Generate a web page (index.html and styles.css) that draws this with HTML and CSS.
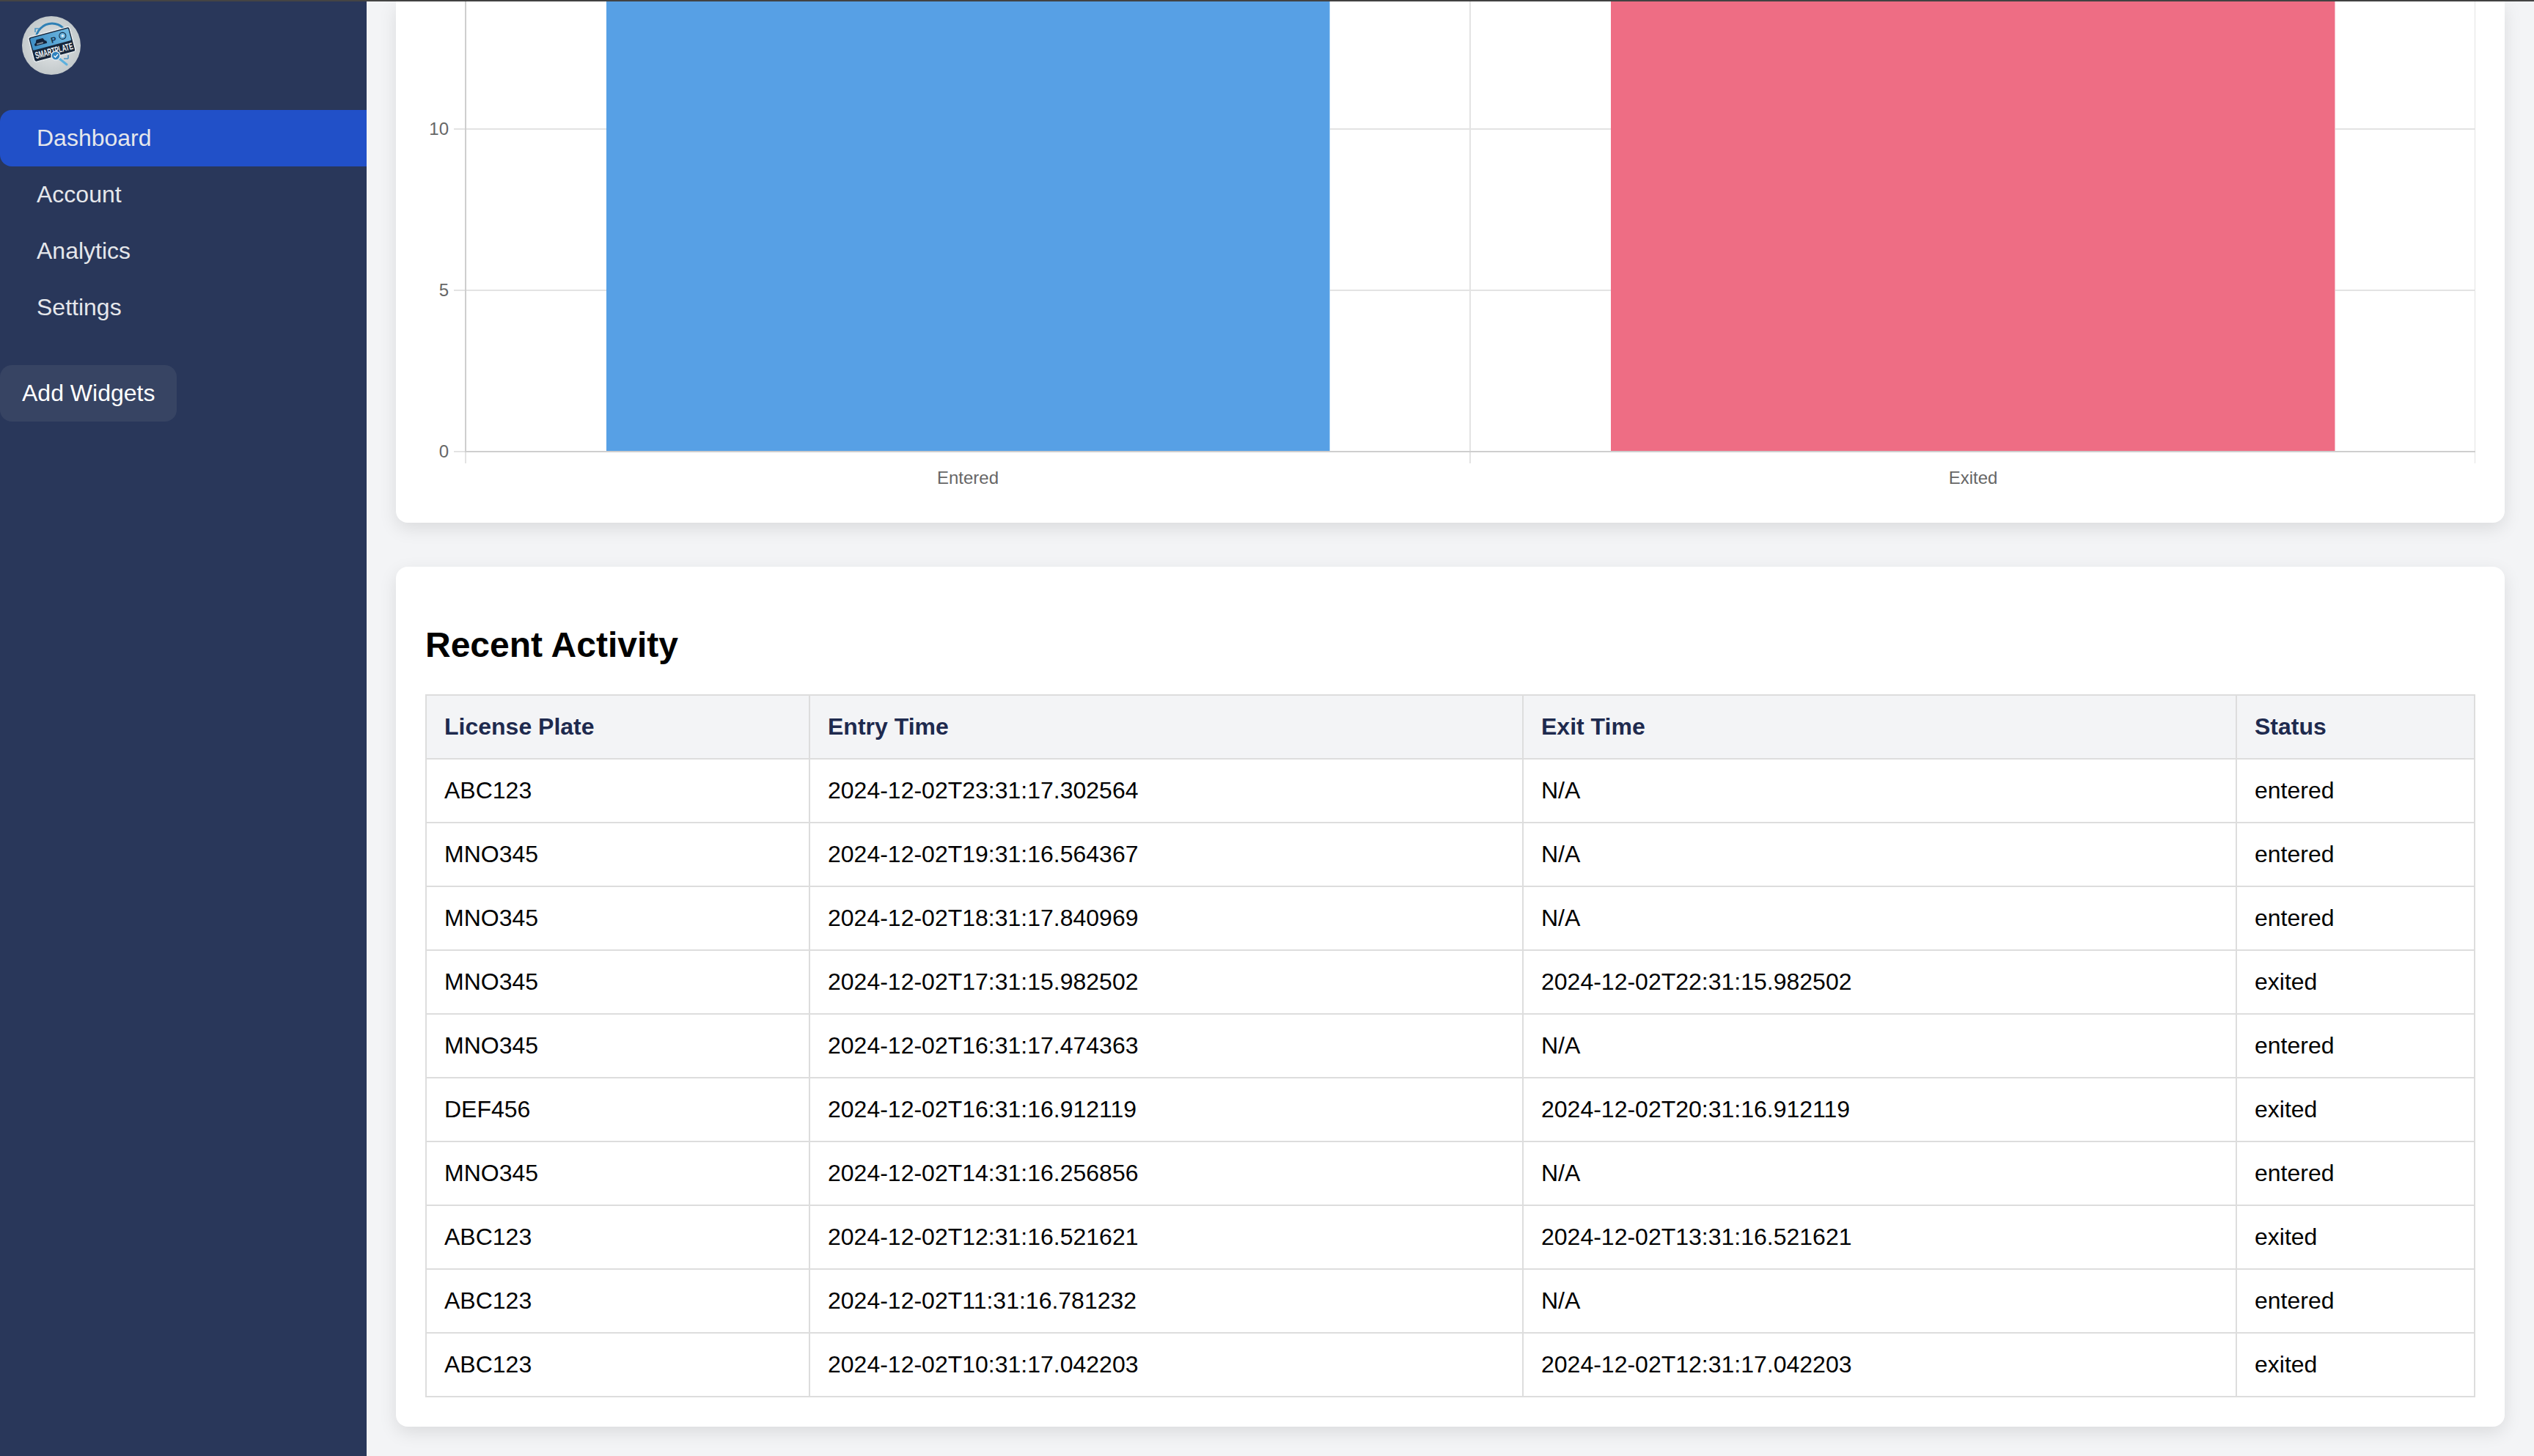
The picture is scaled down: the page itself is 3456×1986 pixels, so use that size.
FILE: index.html
```html
<!DOCTYPE html>
<html lang="en">
<head>
  <meta charset="UTF-8" />
  <title>SmartPlate Dashboard</title>
  <link rel="stylesheet" href="styles.css">
</head>
<body>
  <div class="topEdge"></div>
  <div class="layout">
    <aside class="sidebar">
      <svg class="logo" viewBox="0 0 80 80" role="img" aria-label="SmartPlate logo">
        <defs>
          <radialGradient id="disc" cx="50%" cy="50%" r="50%">
            <stop offset="0" stop-color="#e6e9ea" />
            <stop offset="1" stop-color="#c3c9cb" />
          </radialGradient>
          <linearGradient id="plate" x1="0" y1="0" x2="1" y2="0">
            <stop offset="0" stop-color="#3f8fc6" />
            <stop offset="1" stop-color="#6fb8e0" />
          </linearGradient>
        </defs>
        <circle cx="40" cy="40" r="40" fill="url(#disc)" />
        <circle cx="41" cy="32" r="22" fill="none" stroke="#2f80b5" stroke-width="3" />
        <path d="M18 22v-5h6M63 58v-5M63 58h-6" fill="none" stroke="#4c94c2" stroke-width="1.6" />
        <g transform="rotate(-15 41 39)">
          <rect x="12" y="21" width="58" height="35" rx="3" fill="#17263a" stroke="#eef3f6" stroke-width="1.2" />
          <rect x="14" y="23" width="54" height="17" rx="1.5" fill="url(#plate)" />
          <path d="M18 35v-3l2-1 2-4h9l2 4 2 1v3z" fill="#14233a" />
          <rect x="21" y="32" width="9" height="2" fill="#7f8e9c" />
          <text class="logoP" x="41" y="37">P</text>
          <circle cx="58" cy="31" r="4.5" fill="none" stroke="#15304a" stroke-width="1.2" />
          <circle cx="58" cy="31" r="1.8" fill="#dbe9f2" />
          <text class="logoText" transform="translate(15 52) scale(0.6 1)">SMARTPLATE</text>
        </g>
        <path d="M51 58l10 8" stroke="#5db1de" stroke-width="3" stroke-linecap="round" />
        <circle cx="46" cy="54" r="6" fill="#2f82bd" stroke="#dfe8ee" stroke-width="1.5" />
        <path d="M43.5 54l2 2 3.5-4" fill="none" stroke="#fff" stroke-width="1.2" />
      </svg>
      <nav class="nav">
        <a class="navItem active">Dashboard</a>
        <a class="navItem">Account</a>
        <a class="navItem">Analytics</a>
        <a class="navItem">Settings</a>
      </nav>
      <button class="addBtn">Add Widgets</button>
    </aside>

    <main class="main">
      <section class="card chartCard">
        <svg class="chart" viewBox="580 2 2796 671">
          <!-- grid -->
          <rect class="grid" x="619" y="175" width="2757" height="2" />
          <rect class="grid" x="619" y="395" width="2757" height="2" />
          <rect class="grid" x="2004" y="2" width="2" height="630" />
          <rect class="grid" x="3375" y="2" width="1" height="630" />
          <rect class="grid" x="619" y="615" width="16" height="2" />
          <!-- bars -->
          <rect class="barBlue" x="827" y="2" width="987" height="613" />
          <rect class="edgeBlue" x="1813" y="2" width="1" height="613" />
          <rect class="barPink" x="2197" y="2" width="987" height="613" />
          <rect class="edgePink" x="3184" y="2" width="1" height="613" />
          <!-- axes -->
          <rect class="axis" x="634" y="2" width="2" height="615" />
          <rect class="grid" x="634" y="617" width="2" height="15" />
          <rect class="axis" x="635" y="615" width="2741" height="2" />
          <text class="tick" x="612" y="184" text-anchor="end">10</text>
          <text class="tick" x="612" y="404" text-anchor="end">5</text>
          <text class="tick" x="612" y="624" text-anchor="end">0</text>
          <text class="tick" x="1320" y="660" text-anchor="middle">Entered</text>
          <text class="tick" x="2691" y="660" text-anchor="middle">Exited</text>
        </svg>
      </section>

      <section class="card tableCard">
        <h2>Recent Activity</h2>
        <table>
          <colgroup>
            <col class="colPlate"><col class="colTime"><col class="colTime"><col>
          </colgroup>
          <thead>
            <tr><th>License Plate</th><th>Entry Time</th><th>Exit Time</th><th>Status</th></tr>
          </thead>
          <tbody>
            <tr><td>ABC123</td><td>2024-12-02T23:31:17.302564</td><td>N/A</td><td>entered</td></tr>
            <tr><td>MNO345</td><td>2024-12-02T19:31:16.564367</td><td>N/A</td><td>entered</td></tr>
            <tr><td>MNO345</td><td>2024-12-02T18:31:17.840969</td><td>N/A</td><td>entered</td></tr>
            <tr><td>MNO345</td><td>2024-12-02T17:31:15.982502</td><td>2024-12-02T22:31:15.982502</td><td>exited</td></tr>
            <tr><td>MNO345</td><td>2024-12-02T16:31:17.474363</td><td>N/A</td><td>entered</td></tr>
            <tr><td>DEF456</td><td>2024-12-02T16:31:16.912119</td><td>2024-12-02T20:31:16.912119</td><td>exited</td></tr>
            <tr><td>MNO345</td><td>2024-12-02T14:31:16.256856</td><td>N/A</td><td>entered</td></tr>
            <tr><td>ABC123</td><td>2024-12-02T12:31:16.521621</td><td>2024-12-02T13:31:16.521621</td><td>exited</td></tr>
            <tr><td>ABC123</td><td>2024-12-02T11:31:16.781232</td><td>N/A</td><td>entered</td></tr>
            <tr><td>ABC123</td><td>2024-12-02T10:31:17.042203</td><td>2024-12-02T12:31:17.042203</td><td>exited</td></tr>
          </tbody>
        </table>
      </section>
    </main>
  </div>
</body>
</html>
```

FILE: styles.css
```css
body {
  margin: 0;
  font-family: "Liberation Sans", Arial, sans-serif;
  font-size: 32px;
  background: #f3f4f6;
  overflow: hidden;
}

.topEdge {
  height: 2px;
  background: #444;
}

.layout {
  display: flex;
  height: 1984px;
}

.sidebar {
  width: 500px;
  flex-shrink: 0;
  background: #29375a;
  padding-top: 20px;
  box-sizing: border-box;
}

.logo {
  display: block;
  width: 80px;
  height: 80px;
  margin-left: 30px;
}

.logoP {
  font-size: 11px;
  font-weight: bold;
  fill: #14304a;
}

.logoText {
  font-size: 13px;
  font-weight: bold;
  fill: #f2f6f8;
}

.nav {
  display: flex;
  flex-direction: column;
  margin-top: 48px;
}

.navItem {
  padding: 20px 50px;
  line-height: 37px;
  color: #e5e7eb;
}

.navItem.active {
  background: #2150c8;
  border-radius: 16px 0 0 16px;
}

.addBtn {
  display: block;
  margin-top: 40px;
  padding: 20px 30px;
  border: none;
  border-radius: 16px;
  background: #374463;
  color: #fff;
  font: inherit;
  line-height: 37px;
}

.main {
  flex: 1;
  padding: 0 40px;
  min-width: 0;
}

.card {
  background: #fff;
  border-radius: 16px;
  padding: 40px;
  box-shadow: 0 8px 24px rgba(0, 0, 0, 0.1);
}

.chartCard {
  padding-top: 0;
  border-radius: 0 0 16px 16px;
  margin-bottom: 60px;
}

.chart {
  display: block;
  width: 2796px;
  height: 671px;
}

.grid { fill: #e3e3e3; }
.axis { fill: #cecece; }
.barBlue { fill: #57a0e5; }
.edgeBlue { fill: #9ccbf3; }
.barPink { fill: #ee6d84; }
.edgePink { fill: #f5b6c3; }

.tick {
  font-size: 24px;
  fill: #666;
}

h2 {
  font-size: 48px;
  line-height: 55px;
  margin: 39px 0 40px;
}

table {
  width: 100%;
  border-collapse: collapse;
  table-layout: fixed;
}

.colPlate { width: 523px; }
.colTime { width: 973px; }

th, td {
  border: 2px solid #ddd;
  padding: 24px;
  line-height: 37px;
  text-align: left;
}

th {
  background: #f3f4f6;
  color: #1e2a4e;
  font-weight: bold;
}
```
